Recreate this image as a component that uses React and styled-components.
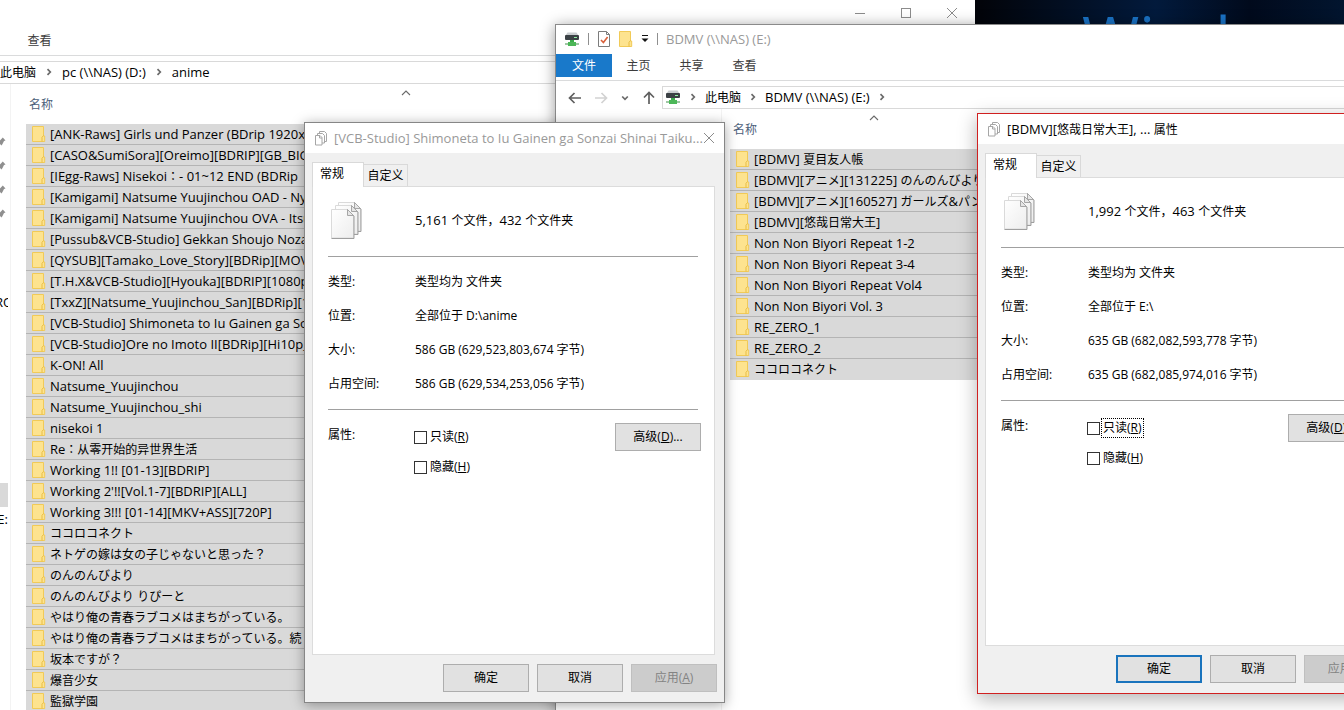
import React from "react";
import styled, { createGlobalStyle, css } from "styled-components";

const GlobalStyle = createGlobalStyle`
  *, *::before, *::after { box-sizing: border-box; }
  html, body, #root { height: 100%; }
  body {
    margin: 0;
    overflow: hidden;
    background: #02040a;
    color: #000;
    font-family: "Open Sans", "Noto Sans CJK SC", "Noto Sans CJK JP", sans-serif;
    font-size: 13px;
    line-height: 20px;
  }
  button, input { font: inherit; color: inherit; }
  button { padding: 0; border: 0; background: none; }
  ul, dl, dd, dt, h1, h2 { margin: 0; padding: 0; font: inherit; list-style: none; }
  svg { display: block; flex: none; }
`;

/* ---------- text ---------- */

const Han = styled.span`
  font-size: 12px;
  font-family: ${(p) =>
    p.$jp
      ? '"Noto Sans CJK JP", "Noto Sans CJK SC", sans-serif'
      : '"Noto Sans CJK SC", "Noto Sans CJK JP", sans-serif'};
`;

const CJK_RUN = /([\u2E80-\u9FFF\uFF00-\uFFEF]+)/;

function T({ children, jp }) {
  return children
    .split(CJK_RUN)
    .map((part, i) => (i % 2 ? <Han key={i} $jp={jp}>{part}</Han> : part));
}

/* ---------- icons ---------- */

const FolderIcon = () => (
  <svg width="14" height="16" viewBox="0 0 14 16" aria-hidden="true">
    <path d="M.5.5h11v9.500h1.200v5.500H.5z" fill="#fde38f" stroke="#f1ca57" />
    <path d="M10 15.500v-4.200l1.500-1.800" fill="none" stroke="#e8bd45" />
  </svg>
);

const DriveIcon = () => (
  <svg width="16" height="16" viewBox="0 0 16 16" aria-hidden="true">
    <path d="M3.500 1.500h9l2 3h-13z" fill="#c9cdd0" />
    <rect x="1" y="4" width="14" height="5" rx="1" fill="#3b4145" />
    <rect x="10" y="6" width="3" height="1" fill="#8ff0a2" />
    <rect x="6" y="9" width="4" height="3" fill="#3dac4d" />
    <rect x="4" y="11" width="8" height="4" fill="#4cb758" />
    <rect x="1" y="12" width="3" height="2" fill="#9fc7a4" />
    <rect x="12" y="12" width="3" height="2" fill="#9fc7a4" />
  </svg>
);

const CheckDocIcon = () => (
  <svg width="14" height="16" viewBox="0 0 14 16" aria-hidden="true">
    <path d="M1.500.5h8l3 3v12h-11z" fill="#fff" stroke="#7c7c7c" />
    <path d="M9.500.5v3h3" fill="none" stroke="#7c7c7c" />
    <path d="M4 9l2.400 2.600L10.600 6" fill="none" stroke="#d9603a" strokeWidth="1.600" />
  </svg>
);

const DropIcon = () => (
  <svg width="8" height="8" viewBox="0 0 8 8" aria-hidden="true">
    <path d="M1 .5h6" stroke="#111" />
    <path d="M.5 3.500h7L4 7z" fill="#111" />
  </svg>
);

const Arrow = ({ dir, color }) => (
  <svg
    width="14"
    height="14"
    viewBox="0 0 14 14"
    fill="none"
    stroke={color}
    strokeWidth="1.700"
    aria-hidden="true"
  >
    {dir === "left" && <path d="M13 7H2M6.500 2L1.500 7l5 5" />}
    {dir === "right" && <path d="M1 7h11M7.500 2l5 5-5 5" />}
    {dir === "up" && <path d="M7 13V2M2 6.500l5-5 5 5" />}
  </svg>
);

const Chevron = ({ dir = "right", color = "#6a6a6a" }) => (
  <svg
    width="10"
    height="10"
    viewBox="0 0 10 10"
    fill="none"
    stroke={color}
    strokeWidth={dir === "up" ? 1.100 : 1.700}
    aria-hidden="true"
  >
    {dir === "right" && <path d="M3.500 2.200L6.300 5 3.500 7.800" />}
    {dir === "down" && <path d="M2.200 3.500L5 6.300l2.800-2.800" />}
    {dir === "up" && <path d="M1 7l4-4 4 4" />}
  </svg>
);

const CaptionIcon = ({ kind }) => (
  <svg width="12" height="12" viewBox="0 0 12 12" fill="none" stroke="#8c8c8c" aria-hidden="true">
    {kind === "min" && <path d="M1 6.500h10" />}
    {kind === "max" && <rect x="1.500" y="1.500" width="9" height="9" />}
    {kind === "close" && <path d="M1 1l10 10M11 1L1 11" />}
  </svg>
);

const PinIcon = () => (
  <svg width="6" height="12" viewBox="0 0 6 12" aria-hidden="true">
    <path d="M0 4.500L2.800 1.500 5.500 4.400 4 5 2.500 8 1.500 9.500 0 8z" fill="#8f8f8f" />
  </svg>
);

const PagesIcon = () => (
  <svg width="34" height="40" viewBox="0 0 34 40" aria-hidden="true">
    <defs>
      <linearGradient id="page" x1="0" y1="0" x2="1" y2="1">
        <stop offset="0" stopColor="#fff" />
        <stop offset="1" stopColor="#ededed" />
      </linearGradient>
    </defs>
    {[
      [7, 2],
      [4, 5],
      [0, 9],
    ].map(([x, y]) => (
      <g key={x} transform={`translate(${x + 1} ${y})`}>
        <path d="M.5.5h16l6 6v22.500H.5z" fill="url(#page)" stroke="#dadada" />
        <path d="M.5 29.500h22.500V7l-6.500-6.500" fill="none" stroke="#9f9f9f" />
        <path d="M16.500.5v6h6z" fill="#e6e6e6" stroke="#a6a6a6" />
      </g>
    ))}
  </svg>
);

const PagesSmallIcon = () => (
  <svg width="14" height="16" viewBox="0 0 14 16" fill="#fff" stroke="#a6a6a6" aria-hidden="true">
    <path d="M5.500 1.500h5l2 2v8h-7z" />
    <path d="M3.500 3.500h5l2 2v7.500h-7z" />
    <path d="M1.500 5.500h4.500l2 2v7.500H1.500z" />
    <path d="M5.500 5.500v2.500h2.500" fill="none" />
  </svg>
);

/* ---------- desktop ---------- */

const Desktop = styled.main`
  position: relative;
  height: 100vh;
  overflow: hidden;
  background: #fff;
`;

const Wallpaper = styled.div`
  height: 60px;
  padding-left: 1082px;
  overflow: hidden;
  background: linear-gradient(90deg, #02040a 73%, #021a3c 86%, #010a1c 93%, #02152f 100%);
  color: #1a72c4;
  font-family: "Open Sans", sans-serif;
  font-size: 62px;
  line-height: 76px;
  white-space: nowrap;
`;

const Explorer = styled.section`
  position: absolute;
  top: ${(p) => p.$top}px;
  left: ${(p) => p.$left}px;
  right: ${(p) => p.$right}px;
  bottom: 0;
  display: flex;
  flex-direction: column;
  overflow: hidden;
  background: #fff;
  ${(p) =>
    p.$framed &&
    css`
      border: solid #8a8a8a;
      border-width: 1px 0 0 1px;
      box-shadow: 0 2px 14px rgba(0, 0, 0, 0.4);
    `}
`;

const CaptionBar = styled.div`
  flex: none;
  display: flex;
  justify-content: flex-end;
  height: 26px;
`;

const CaptionButton = styled.button`
  display: grid;
  place-items: center;
  width: 46px;
`;

const TitleBar = styled.header`
  flex: none;
  display: flex;
  align-items: center;
  gap: 8px;
  height: 29px;
  padding: 0 0 1px 8px;
  color: #999;
`;

const Divider = styled.span`
  width: 1px;
  height: 12px;
  background: #8f8f8f;
`;

const Ribbon = styled.nav`
  flex: none;
  display: flex;
  align-items: flex-end;
  height: ${(p) => p.$height}px;
  padding: 0 0 3px ${(p) => p.$indent || 0}px;
  border-bottom: 1px solid #dadbdc;
`;

const RibbonTab = styled.button`
  width: ${(p) => (p.$primary ? 56 : 53)}px;
  height: 23px;
  padding-top: 1px;
  font-size: 12px;
  color: ${(p) => (p.$primary ? "#fff" : "#3c3c3c")};
  background: ${(p) => (p.$primary ? "#1979ca" : "transparent")};
`;

const AddressRow = styled.div`
  flex: none;
  display: flex;
  align-items: center;
  margin-top: 5px;
`;

const NavButtons = styled.div`
  display: flex;
  align-items: center;
  gap: 12px;
  width: 106px;
  padding-left: 12px;
`;

const AddressBox = styled.div`
  flex: 1;
  display: flex;
  align-items: center;
  gap: ${(p) => p.$gap}px;
  height: 23px;
  padding: 0 0 1px ${(p) => p.$indent || 0}px;
  border: 1px solid #d9d9d9;
  border-width: 1px 0 1px ${(p) => (p.$indent ? 1 : 0)}px;
`;

const Crumb = styled.button`
  white-space: nowrap;
`;

const Content = styled.div`
  flex: 1;
  display: flex;
  min-height: 0;
`;

const NavPane = styled.aside`
  flex: none;
  width: ${(p) => p.$width}px;
  padding: 46px 2px 0 0;
  border-right: 1px solid #f3f3f3;
`;

const NavItem = styled.div`
  display: flex;
  align-items: center;
  justify-content: ${(p) => p.$align || "flex-start"};
  height: 24px;
  margin-top: ${(p) => p.$space || 0}px;
  overflow: hidden;
  white-space: nowrap;
  background: ${(p) => (p.$selected ? "#d9d9d9" : "transparent")};
`;

const FilePane = styled.div`
  flex: 1;
  min-width: 0;
  padding-left: ${(p) => p.$indent}px;
`;

const ColumnHeader = styled.div`
  position: relative;
  height: 40px;
  padding: 11px 0 0 3px;
  color: #4c607a;
  font-size: 12px;
`;

const SortMark = styled.span`
  position: absolute;
  top: 4px;
  left: ${(p) => p.$left}px;
`;

const FileRow = styled.li`
  display: flex;
  align-items: center;
  gap: 4px;
  height: 21px;
  padding-left: 6px;
  border-bottom: 1px solid #b4b4b4;
  background: #d9d9d9;
  white-space: nowrap;

  &:last-child { border-bottom-color: #d9d9d9; }
`;

/* ---------- property sheet ---------- */

const Sheet = styled.section`
  position: absolute;
  top: ${(p) => p.$top}px;
  left: ${(p) => p.$left}px;
  display: flex;
  flex-direction: column;
  width: 421px;
  height: 581px;
  background: #f0f0f0;
  ${(p) =>
    p.$active
      ? css`
          border: 1px solid #d02020;
          box-shadow: 0 5px 18px rgba(0, 0, 0, 0.3);
        `
      : css`
          border: 1px solid #868686;
          box-shadow: 0 2px 12px rgba(0, 0, 0, 0.35);
        `}
`;

const SheetTitle = styled.header`
  flex: none;
  display: flex;
  align-items: center;
  height: 30px;
  padding: 0 9px;
  background: #fff;
  color: ${(p) => (p.$active ? "#000" : "#999")};
`;

const SheetName = styled.h2`
  flex: 1;
  padding-left: 6px;
  white-space: nowrap;
`;

const TabRow = styled.div`
  display: flex;
  align-items: flex-end;
  padding: 9px 7px 0;
`;

const SheetTab = styled.button`
  font-size: 12px;
  border: 1px solid #d9d9d9;
  border-bottom: 0;
  ${(p) =>
    p.$current
      ? css`
          z-index: 1;
          width: 52px;
          height: 25px;
          margin-bottom: -1px;
          padding: 0 12px 2px 0;
          background: #fff;
        `
      : css`
          width: 44px;
          height: 22px;
          border-left: 0;
          background: #f0f0f0;
        `}
`;

const Panel = styled.div`
  flex: 1;
  margin: 0 9px 0 7px;
  padding: 0 16px 0 15px;
  border: 1px solid #dcdcdc;
  background: #fff;
`;

const Summary = styled.div`
  display: grid;
  grid-template-columns: 87px 1fr;
  align-items: center;
  height: 70px;
  padding-bottom: 4px;
  border-bottom: 1px solid #a0a0a0;

  svg { margin-left: 2px; }
`;

const Facts = styled.dl`
  display: grid;
  grid-template-columns: 87px 1fr;
  grid-auto-rows: 34px;
  align-items: center;
  padding: 8px 0;
  border-bottom: 1px solid #a0a0a0;
  font-size: 12px;
`;

const Attributes = styled.div`
  display: grid;
  grid-template-columns: 86px 1fr auto;
  align-items: start;
  padding-top: 13px;
  margin-right: -3px;
  font-size: 12px;
`;

const AttributeName = styled.span`
  padding-top: 2px;
`;

const Checks = styled.div`
  display: grid;
  gap: 10px;
  padding-top: 4px;
`;

const Check = styled.label`
  display: flex;
  align-items: center;
  gap: 2px;
  height: 20px;
`;

const Box = styled.input`
  appearance: none;
  width: 13px;
  height: 13px;
  margin: 0;
  border: 1px solid #333;
  background: #fff;
`;

const CheckText = styled.span`
  line-height: 18px;
  padding: 0 1px;
  outline: ${(p) => (p.$focused ? "1px dotted #000" : "none")};
`;

const PushButton = styled.button`
  width: 86px;
  height: 28px;
  font-size: 12px;
  background: #e1e1e1;
  border: ${(p) => (p.$default ? "2px solid #1a74bd" : "1px solid #adadad")};

  &:disabled {
    color: #838383;
    background: #ccc;
    border-color: #bfbfbf;
  }
`;

const Actions = styled.footer`
  display: flex;
  justify-content: flex-end;
  gap: 8px;
  padding: 9px 7px 10px;
`;

/* ---------- content ---------- */

const animeFolders = [
  "[ANK-Raws] Girls und Panzer (BDrip 1920x1080)",
  "[CASO&SumiSora][Oreimo][BDRIP][GB_BIG5]",
  "[IEgg-Raws] Nisekoi：- 01~12 END (BDRip",
  "[Kamigami] Natsume Yuujinchou OAD - Nyanko",
  "[Kamigami] Natsume Yuujinchou OVA - Itsuka",
  "[Pussub&VCB-Studio] Gekkan Shoujo Nozaki",
  "[QYSUB][Tamako_Love_Story][BDRip][MOVIE]",
  "[T.H.X&VCB-Studio][Hyouka][BDRIP][1080p]",
  "[TxxZ][Natsume_Yuujinchou_San][BDRip][1080p]",
  "[VCB-Studio] Shimoneta to Iu Gainen ga Sonzai",
  "[VCB-Studio]Ore no Imoto II[BDRip][Hi10p_1080p]",
  "K-ON! All",
  "Natsume_Yuujinchou",
  "Natsume_Yuujinchou_shi",
  "nisekoi 1",
  "Re：从零开始的异世界生活",
  "Working 1!! [01-13][BDRIP]",
  "Working 2'!![Vol.1-7][BDRIP][ALL]",
  "Working 3!!! [01-14][MKV+ASS][720P]",
  "ココロコネクト",
  "ネトゲの嫁は女の子じゃないと思った？",
  "のんのんびより",
  "のんのんびより りぴーと",
  "やはり俺の青春ラブコメはまちがっている。",
  "やはり俺の青春ラブコメはまちがっている。続",
  "坂本ですが？",
  "爆音少女",
  "監獄学園",
];

const bdmvFolders = [
  "[BDMV] 夏目友人帳",
  "[BDMV][アニメ][131225] のんのんびより",
  "[BDMV][アニメ][160527] ガールズ&パンツァー",
  "[BDMV][悠哉日常大王]",
  "Non Non Biyori Repeat 1-2",
  "Non Non Biyori Repeat 3-4",
  "Non Non Biyori Repeat Vol4",
  "Non Non Biyori Vol. 3",
  "RE_ZERO_1",
  "RE_ZERO_2",
  "ココロコネクト",
];

function FileList({ items, indent, sortLeft }) {
  return (
    <FilePane $indent={indent}>
      <ColumnHeader>
        名称
        <SortMark $left={sortLeft}>
          <Chevron dir="up" />
        </SortMark>
      </ColumnHeader>
      <ul>
        {items.map((name) => (
          <FileRow key={name}>
            <FolderIcon />
            <span>
              <T jp>{name}</T>
            </span>
          </FileRow>
        ))}
      </ul>
    </FilePane>
  );
}

function PropertySheet({ top, left, active, title, count, place, size, onDisk }) {
  const facts = [
    ["类型:", "类型均为 文件夹"],
    ["位置:", place],
    ["大小:", size],
    ["占用空间:", onDisk],
  ];
  return (
    <Sheet $top={top} $left={left} $active={active} role="dialog" aria-label={title}>
      <SheetTitle $active={active}>
        <PagesSmallIcon />
        <SheetName>
          <T>{title}</T>
        </SheetName>
        <button aria-label="关闭">
          <CaptionIcon kind="close" />
        </button>
      </SheetTitle>
      <TabRow role="tablist">
        <SheetTab $current role="tab" aria-selected="true">
          常规
        </SheetTab>
        <SheetTab role="tab" aria-selected="false">
          自定义
        </SheetTab>
      </TabRow>
      <Panel role="tabpanel">
        <Summary>
          <PagesIcon />
          <span>
            <T>{count}</T>
          </span>
        </Summary>
        <Facts>
          {facts.map(([name, value]) => (
            <React.Fragment key={name}>
              <dt>{name}</dt>
              <dd>{value}</dd>
            </React.Fragment>
          ))}
        </Facts>
        <Attributes>
          <AttributeName>属性:</AttributeName>
          <Checks>
            <Check>
              <Box type="checkbox" />
              <CheckText $focused={active}>
                只读(<u>R</u>)
              </CheckText>
            </Check>
            <Check>
              <Box type="checkbox" />
              <CheckText>
                隐藏(<u>H</u>)
              </CheckText>
            </Check>
          </Checks>
          <PushButton>
            高级(<u>D</u>)...
          </PushButton>
        </Attributes>
      </Panel>
      <Actions>
        <PushButton $default={active}>确定</PushButton>
        <PushButton>取消</PushButton>
        <PushButton disabled>
          应用(<u>A</u>)
        </PushButton>
      </Actions>
    </Sheet>
  );
}

export default function App() {
  return (
    <Desktop>
      <GlobalStyle />
      <Wallpaper>Windows</Wallpaper>

      <Explorer $top={0} $left={0} $right={369}>
        <CaptionBar>
          {["min", "max", "close"].map((kind) => (
            <CaptionButton key={kind} aria-label={kind}>
              <CaptionIcon kind={kind} />
            </CaptionButton>
          ))}
        </CaptionBar>
        <Ribbon $height={30} $indent={13}>
          <RibbonTab>查看</RibbonTab>
        </Ribbon>
        <AddressRow>
          <AddressBox $gap={8}>
            <Crumb>
              <T>此电脑</T>
            </Crumb>
            <Chevron />
            <Crumb>pc (\\NAS) (D:)</Crumb>
            <Chevron />
            <Crumb>anime</Crumb>
          </AddressBox>
        </AddressRow>
        <Content>
          <NavPane $width={11}>
            <NavItem><PinIcon /></NavItem>
            <NavItem><PinIcon /></NavItem>
            <NavItem><PinIcon /></NavItem>
            <NavItem><PinIcon /></NavItem>
            <NavItem $space={64} $align="center">RO</NavItem>
            <NavItem $space={169} $selected />
            <NavItem $align="flex-end">E:</NavItem>
          </NavPane>
          <FileList items={animeFolders} indent={15} sortLeft={375} />
        </Content>
      </Explorer>

      <Explorer $top={24} $left={555} $right={0} $framed>
        <TitleBar>
          <DriveIcon />
          <Divider />
          <CheckDocIcon />
          <FolderIcon />
          <DropIcon />
          <Divider />
          <h1>BDMV (\\NAS) (E:)</h1>
        </TitleBar>
        <Ribbon $height={27}>
          <RibbonTab $primary>文件</RibbonTab>
          <RibbonTab>主页</RibbonTab>
          <RibbonTab>共享</RibbonTab>
          <RibbonTab>查看</RibbonTab>
        </Ribbon>
        <AddressRow>
          <NavButtons>
            <button aria-label="后退"><Arrow dir="left" color="#5f5f5f" /></button>
            <button aria-label="前进"><Arrow dir="right" color="#d2d2d2" /></button>
            <button aria-label="最近"><Chevron dir="down" /></button>
            <button aria-label="上移"><Arrow dir="up" color="#5f5f5f" /></button>
          </NavButtons>
          <AddressBox $gap={7} $indent={2}>
            <DriveIcon />
            <Chevron />
            <Crumb>
              <T>此电脑</T>
            </Crumb>
            <Chevron />
            <Crumb>BDMV (\\NAS) (E:)</Crumb>
            <Chevron />
          </AddressBox>
        </AddressRow>
        <Content>
          <NavPane $width={166} />
          <FileList items={bdmvFolders} indent={8} sortLeft={139} />
        </Content>
      </Explorer>

      <PropertySheet
        top={122}
        left={304}
        title="[VCB-Studio] Shimoneta to Iu Gainen ga Sonzai Shinai Taiku..."
        count="5,161 个文件，432 个文件夹"
        place="全部位于 D:\anime"
        size="586 GB (629,523,803,674 字节)"
        onDisk="586 GB (629,534,253,056 字节)"
      />
      <PropertySheet
        active
        top={113}
        left={977}
        title="[BDMV][悠哉日常大王], ... 属性"
        count="1,992 个文件，463 个文件夹"
        place="全部位于 E:\"
        size="635 GB (682,082,593,778 字节)"
        onDisk="635 GB (682,085,974,016 字节)"
      />
    </Desktop>
  );
}
